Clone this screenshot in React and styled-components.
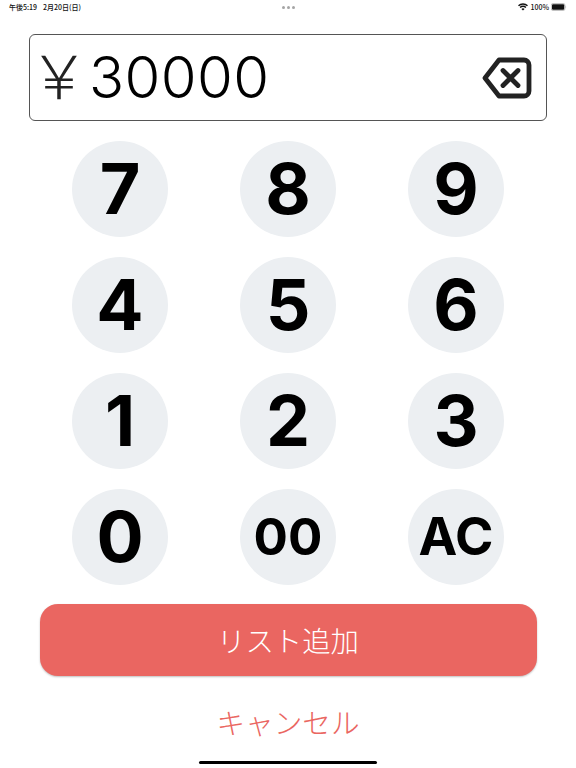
import React from 'react'
import styled, { createGlobalStyle } from 'styled-components'

const GlobalStyle = createGlobalStyle`
  html, body {
    margin: 0;
    padding: 0;
    background: #fff;
  }
  body {
    font-family: "Liberation Sans", "Noto Sans CJK JP", sans-serif;
  }
`

const Page = styled.div`
  width: 576px;
  height: 768px;
  display: flex;
  flex-direction: column;
  align-items: center;
  overflow: hidden;
  position: relative;
`

const StatusBar = styled.div`
  width: 100%;
  height: 14px;
  box-sizing: border-box;
  padding: 0 9px;
  display: grid;
  grid-template-columns: 1fr auto 1fr;
  align-items: center;
  font-family: "Noto Sans CJK JP", sans-serif;
  font-size: 7px;
  font-weight: 500;
  color: #111;
`

const StatusLeft = styled.div`
  display: flex;
  gap: 6px;
`

const StatusDots = styled.div`
  display: flex;
  gap: 2px;
`

const Dot = styled.span`
  width: 3px;
  height: 3px;
  border-radius: 50%;
  background: #a5a5a5;
`

const StatusRight = styled.div`
  display: flex;
  justify-content: flex-end;
  align-items: center;
  gap: 2px;
`

const Display = styled.div`
  width: 518px;
  height: 87px;
  margin-top: 20px;
  box-sizing: border-box;
  border: 1px solid #555;
  border-radius: 6px;
  display: flex;
  align-items: center;
  justify-content: space-between;
  padding: 0 14px 0 0;
`

const Amount = styled.div`
  display: flex;
  align-items: center;
  margin-top: -2px;
  font-family: "Inter", sans-serif;
  font-size: 58px;
  font-weight: 300;
  letter-spacing: 0.4px;
  color: #000;
`

const Yen = styled.span`
  font-family: "Noto Sans CJK JP", sans-serif;
  font-weight: 300;
  font-size: 60px;
  letter-spacing: 0;
  color: #222;
  margin: 0 0 8px -1px;
`

const Keypad = styled.div`
  width: 432px;
  margin-top: 19.7px;
  display: grid;
  grid-template-columns: repeat(3, 96px);
  justify-content: space-between;
  row-gap: 20px;
`

const Key = styled.button`
  width: 96px;
  height: 96px;
  border: none;
  border-radius: 50%;
  padding: 0;
  background: #eceff2;
  color: #000;
  font-family: "Inter", "Liberation Sans", sans-serif;
  font-weight: 700;
  font-size: ${(p) => p.$size || 70}px;
  line-height: 1;
`

const AddButton = styled.button`
  width: 497px;
  height: 72px;
  margin-top: 19.3px;
  border: none;
  border-radius: 18px;
  background: #ea6661;
  color: #fff;
  font-family: "Noto Sans CJK JP", sans-serif;
  font-weight: 300;
  font-size: 28.4px;
  box-shadow: 0 1px 2px rgba(0, 0, 0, 0.25);
`

const CancelButton = styled.button`
  margin-top: 25px;
  border: none;
  background: none;
  padding: 0;
  color: #ea6661;
  font-family: "Noto Sans CJK JP", sans-serif;
  font-weight: 300;
  font-size: 28.6px;
  line-height: 42px;
`

const HomeBar = styled.div`
  position: absolute;
  left: 199px;
  bottom: 4px;
  width: 178px;
  height: 3px;
  border-radius: 2px;
  background: #000;
`

const KEYS = [
  { label: '7' }, { label: '8' }, { label: '9' },
  { label: '4' }, { label: '5' }, { label: '6' },
  { label: '1' }, { label: '2' }, { label: '3' },
  { label: '0' }, { label: '00', size: 51 }, { label: 'AC', size: 52 },
]

function WifiIcon() {
  return (
    <svg width="10" height="8" viewBox="0 0 10 8">
      <path d="M5 7.6 3.4 5.9a2.3 2.3 0 0 1 3.2 0ZM2.6 5.1 1.6 4a4.8 4.8 0 0 1 6.8 0L7.4 5.1a3.4 3.4 0 0 0-4.8 0ZM1 3.3 0 2.2a7.2 7.2 0 0 1 10 0L9 3.3a5.8 5.8 0 0 0-8 0Z" fill="#111" />
    </svg>
  )
}

function BatteryIcon() {
  return (
    <svg width="16" height="8" viewBox="0 0 16 8">
      <rect x="0.3" y="0.5" width="13.6" height="7" rx="1.6" fill="none" stroke="#999" strokeWidth="0.6" />
      <rect x="1" y="1.2" width="12.2" height="5.6" rx="1" fill="#111" />
      <path d="M14.6 2.8c.7.2.7 2.2 0 2.4Z" fill="#999" />
    </svg>
  )
}

function BackspaceIcon() {
  return (
    <svg width="50" height="42" viewBox="0 0 50 42">
      <path d="M17 3H42a5 5 0 0 1 5 5V34a5 5 0 0 1-5 5H17L3 21Z" fill="none" stroke="#222" strokeWidth="4.8" strokeLinejoin="round" />
      <path d="M21 13.5 36 28.5M36 13.5 21 28.5" fill="none" stroke="#222" strokeWidth="4.8" strokeLinecap="round" />
    </svg>
  )
}

export default function App() {
  return (
    <Page>
      <GlobalStyle />
      <StatusBar>
        <StatusLeft>
          <span>午後5:19</span>
          <span>2月20日(日)</span>
        </StatusLeft>
        <StatusDots>
          <Dot />
          <Dot />
          <Dot />
        </StatusDots>
        <StatusRight>
          <WifiIcon />
          <span>100%</span>
          <BatteryIcon />
        </StatusRight>
      </StatusBar>
      <Display>
        <Amount>
          <Yen>{'\uFFE5'}</Yen>
          <span>30000</span>
        </Amount>
        <BackspaceIcon />
      </Display>
      <Keypad>
        {KEYS.map((k) => (
          <Key key={k.label} $size={k.size}>{k.label}</Key>
        ))}
      </Keypad>
      <AddButton>リスト追加</AddButton>
      <CancelButton>キャンセル</CancelButton>
      <HomeBar />
    </Page>
  )
}
